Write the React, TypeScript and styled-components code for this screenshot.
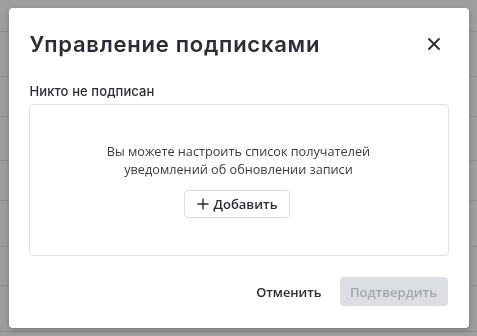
import React from "react";
import styled, { createGlobalStyle } from "styled-components";

const Global = createGlobalStyle`
  html, body { margin: 0; padding: 0; }
  body { width: 477px; height: 336px; overflow: hidden; background: #fff; font-family: "Open Sans", sans-serif; }
`;

const Page = styled.div`
  width: 477px;
  height: 336px;
  display: flex;
  flex-direction: column;
`;

const Row = styled.div<{ $h: number }>`
  height: ${(p) => p.$h}px;
  flex: none;
  border-bottom: 1px solid #e2e2e2;
`;

const Backdrop = styled.div`
  position: fixed;
  inset: 0;
  background: rgba(0, 0, 0, 0.38);
  display: flex;
  align-items: center;
  justify-content: center;
`;

const Modal = styled.div`
  width: 460px;
  height: 320px;
  box-sizing: border-box;
  background: #fff;
  border-radius: 4px;
  box-shadow: 0 2px 6px rgba(0, 0, 0, 0.25);
  padding: 0 20px 21px 20px;
  display: flex;
  flex-direction: column;
`;

const Header = styled.div`
  height: 72px;
  display: flex;
  align-items: center;
  justify-content: space-between;
  padding-left: 1px;
`;

const Title = styled.h2`
  margin: 0;
  font-family: "Inter", sans-serif;
  font-weight: 600;
  font-size: 22px;
  color: #2b2d33;
  letter-spacing: 0.75px;
`;

const Close = styled.button`
  border: 0;
  background: none;
  padding: 0;
  width: 24px;
  height: 24px;
  display: flex;
  align-items: center;
  justify-content: center;
  margin-right: 3px;
  color: #2b2d33;
  cursor: pointer;
`;

const Label = styled.div`
  font-family: "Inter", sans-serif;
  font-weight: 500;
  font-size: 13px;
  letter-spacing: 0.1px;
  color: #2b2d33;
  padding-left: 1px;
  height: 20px;
  line-height: 20px;
  margin-top: 1px;
`;

const Box = styled.div`
  margin-top: 3px;
  height: 152px;
  box-sizing: border-box;
  border: 1px solid #e1e2e6;
  border-radius: 4px;
  display: flex;
  flex-direction: column;
  align-items: center;
  justify-content: center;
  gap: 12px;
  padding-top: 0px;
`;

const Hint = styled.p`
  margin: 0;
  text-align: center;
  font-size: 12.7px;
  line-height: 18px;
  color: #3a3c42;
`;

const AddButton = styled.button`
  height: 28px;
  padding: 0 12px;
  border: 1px solid #dcdde1;
  border-radius: 4px;
  background: #fff;
  display: flex;
  align-items: center;
  gap: 5px;
  margin-right: 3px;
  font-family: "Open Sans", sans-serif;
  font-size: 13px;
  font-weight: 600;
  color: #2b2d33;
`;

const Footer = styled.div`
  margin-top: auto;
  display: flex;
  justify-content: flex-end;
  align-items: center;
  gap: 18px;
`;

const TextButton = styled.button`
  border: 0;
  background: none;
  padding: 0;
  font-family: "Open Sans", sans-serif;
  font-size: 12.8px;
  font-weight: 600;
  color: #2b2d33;
`;

const Primary = styled.button<{ $disabled?: boolean }>`
  height: 29px;
  width: 108px;
  margin-right: 1px;
  margin-bottom: 1px;
  border: 0;
  border-radius: 4px;
  background: ${(p) => (p.$disabled ? "#dcdee2" : "#2f6fde")};
  color: ${(p) => (p.$disabled ? "#a3a7ae" : "#fff")};
  font-family: "Open Sans", sans-serif;
  font-size: 13px;
  font-weight: 600;
`;

const rows = [31, 44, 39, 43, 39, 45, 38, 45];

export default function App() {
  return (
    <>
      <Global />
      <Page>
        {rows.map((h, i) => (
          <Row key={i} $h={h} />
        ))}
      </Page>
      <Backdrop>
        <Modal>
          <Header>
            <Title>Управление подписками</Title>
            <Close aria-label="close">
              <svg width="12" height="12" viewBox="0 0 12 12">
                <path d="M1 1L11 11M11 1L1 11" stroke="currentColor" strokeWidth="1.8" strokeLinecap="round" />
              </svg>
            </Close>
          </Header>
          <Label>Никто не подписан</Label>
          <Box>
            <Hint>
              Вы можете настроить список получателей
              <br />
              уведомлений об обновлении записи
            </Hint>
            <AddButton>
              <svg width="12" height="12" viewBox="0 0 12 12">
                <path d="M6 0.5V11.5M0.5 6H11.5" stroke="currentColor" strokeWidth="1.4" />
              </svg>
              Добавить
            </AddButton>
          </Box>
          <Footer>
            <TextButton>Отменить</TextButton>
            <Primary $disabled>Подтвердить</Primary>
          </Footer>
        </Modal>
      </Backdrop>
    </>
  );
}
